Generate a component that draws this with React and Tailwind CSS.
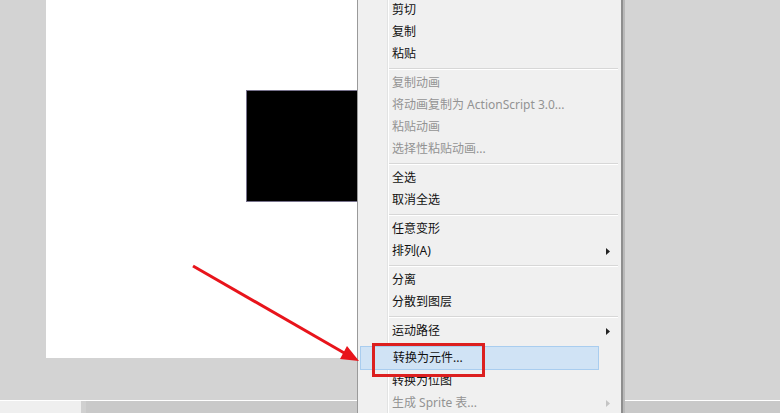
import React from 'react';

const font = { fontFamily: '"Noto Sans", "Noto Sans CJK SC", sans-serif' };

// menu rows: type 'item' | 'sep'
const rows = [
    { label: '剪切' },
    { label: '复制' },
    { label: '粘贴' },
    { sep: true },
    { label: '复制动画', disabled: true },
    { label: '将动画复制为 ActionScript 3.0...', disabled: true },
    { label: '粘贴动画', disabled: true },
    { label: '选择性粘贴动画...', disabled: true },
    { sep: true },
    { label: '全选' },
    { label: '取消全选' },
    { sep: true },
    { label: '任意变形' },
    { label: '排列(A)', sub: true },
    { sep: true },
    { label: '分离' },
    { label: '分散到图层' },
    { sep: true },
    { label: '运动路径', sub: true },
    { sep: true, small: true },
    { label: '转换为元件...', active: true },
    { label: '转换为位图' },
    { label: '生成 Sprite 表...', disabled: true, faintSub: true },
];

const MenuRow = ({ row }) => {
    if (row.sep) {
        return (
            <div className={`${row.small ? 'h-[4px]' : 'h-[7px]'} flex items-center pl-[31px] pr-[3px]`}>
                {!row.small && <div className="w-full h-[2px] border-t border-[#d7d7d7] border-b border-b-white" />}
            </div>
        );
    }
    if (row.active) {
        return (
            <div className="h-[24px] mx-[2px] w-[239px] bg-[#d0e3f5] border border-[#a9cdef] flex items-center pl-[32px] text-[12px] text-[#111]">
                {row.label}
            </div>
        );
    }
    return (
        <div className={`h-[22px] flex items-center pl-[34px] pr-[11px] text-[12px] ${row.disabled ? 'text-[#939393]' : 'text-[#111]'}`}>
            <span className="flex-1">{row.label}</span>
            {row.sub && (
                <svg width="4" height="7" viewBox="0 0 4 7"><path d="M0 0 L4 3.5 L0 7 Z" fill="#222" /></svg>
            )}
            {row.faintSub && (
                <svg width="4" height="7" viewBox="0 0 4 7"><path d="M0 0 L4 3.5 L0 7 Z" fill="#c4c4c4" /></svg>
            )}
        </div>
    );
};

const App = () => {
    return (
        <div className="relative w-[780px] h-[413px] overflow-hidden bg-[#d4d4d4]" style={font}>
            {/* Canvas area */}
            <div className="flex h-[400px]">
                <div className="w-[46px] bg-[#d3d3d3]" />
                <div className="w-[312px] flex flex-col">
                    <div className="h-[358px] bg-white pt-[90px] pl-[200px]">
                        <div className="w-[112px] h-[112px] bg-black border border-[#77728c]" />
                    </div>
                    <div className="flex-1 bg-[#d3d3d3]" />
                </div>
                <div className="flex-1 bg-[#d4d4d4]" />
            </div>

            {/* Bottom bar */}
            <div className="border-t border-white flex h-[13px]">
                <div className="w-[81px] bg-[#efefef]" />
                <div className="w-[5px] bg-[#d0d0d0]" />
                <div className="flex-1 bg-[#c9c9c9]" />
            </div>

            {/* Context menu */}
            <div className="absolute left-[357px] top-[-1px] w-[266px] h-[420px] bg-[#f0f0f0] border-l border-[#9a9a9a] border-r-2 border-r-[#8e8e8e] shadow-[2px_0_0_#b9b9b9]">
                <div className="absolute left-[29px] top-0 bottom-0 w-[2px] border-l border-[#e2e3e3] border-r border-r-white" />
                <div className="relative flex flex-col">
                    {rows.map((row, i) => (
                        <MenuRow key={i} row={row} />
                    ))}
                </div>
            </div>

            {/* Annotation: red box */}
            <div className="absolute left-[372px] top-[343px] w-[113px] h-[34px] border-[3px] border-[#dc1f1f]" />

            {/* Annotation: red arrow */}
            <svg className="absolute left-0 top-0" width="780" height="413" viewBox="0 0 780 413">
                <line x1="193" y1="266" x2="346" y2="354" stroke="#e8141b" strokeWidth="3" />
                <polygon points="359,361 347,346 340,359" fill="#e8141b" />
            </svg>
        </div>
    );
};

export default App;
